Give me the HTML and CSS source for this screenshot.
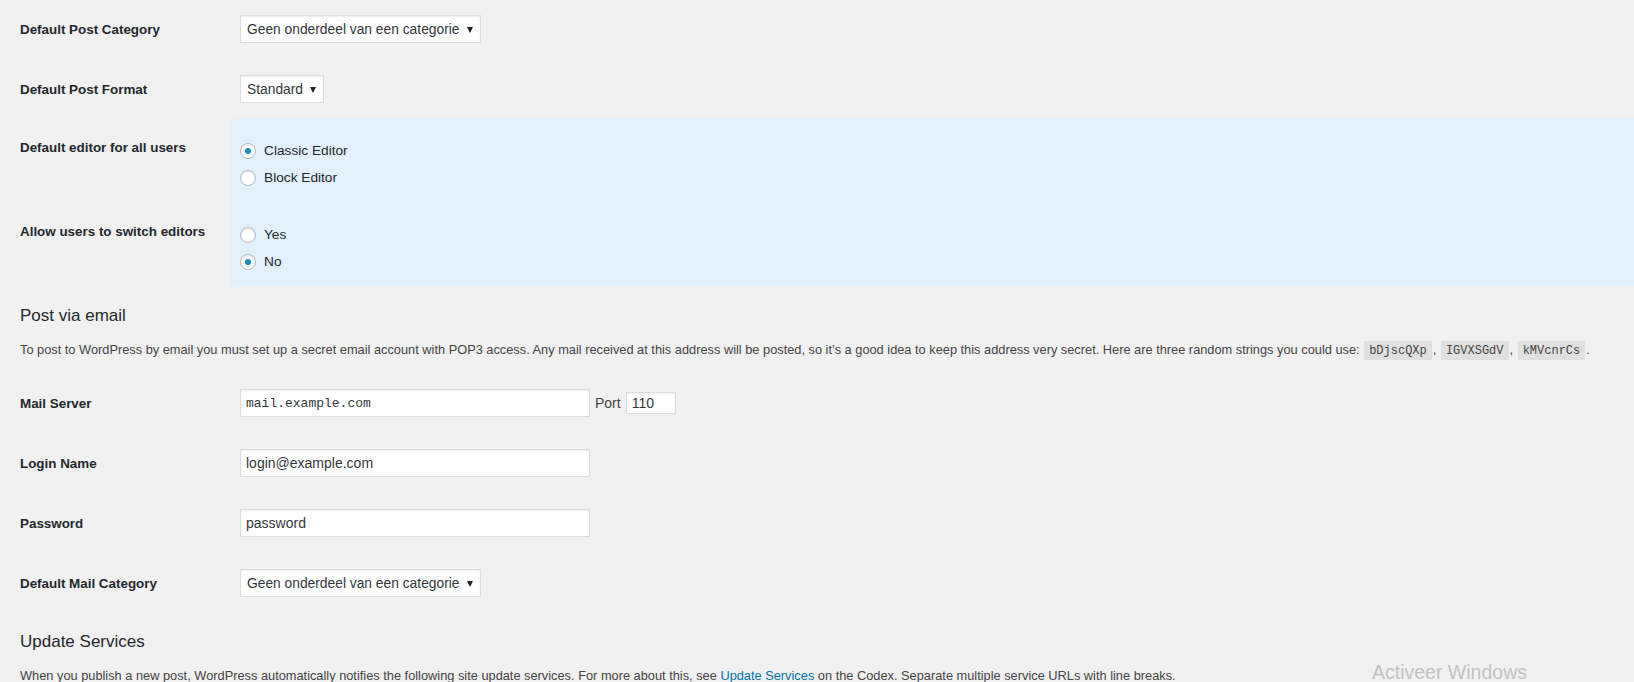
FILE: index.html
```html
<!DOCTYPE html>
<html lang="en">
<head>
    <meta charset="UTF-8">
    <title>Writing Settings</title>
    <link rel="stylesheet" href="styles.css">
</head>
<body>
    <div class="wrap">
        <div class="form-table">
            <div class="form-row">
                <div class="label">Default Post Category</div>
                <div class="field">
                    <span class="select"><select><option>Geen onderdeel van een categorie</option></select></span>
                </div>
            </div>
            <div class="form-row">
                <div class="label">Default Post Format</div>
                <div class="field">
                    <span class="select"><select><option>Standard</option></select></span>
                </div>
            </div>
            <!-- classic editor plugin options -->
            <div class="form-row highlight">
                <div class="label">Default editor for all users</div>
                <div class="field radios">
                    <label><input type="radio" name="editor" checked> Classic Editor</label>
                    <label><input type="radio" name="editor"> Block Editor</label>
                </div>
            </div>
            <div class="form-row highlight">
                <div class="label">Allow users to switch editors</div>
                <div class="field radios">
                    <label><input type="radio" name="switch"> Yes</label>
                    <label><input type="radio" name="switch" checked> No</label>
                </div>
            </div>
        </div>

        <h2>Post via email</h2>
        <p>To post to WordPress by email you must set up a secret email account with POP3 access. Any mail received at this address will be posted, so it&rsquo;s a good idea to keep this address very secret. Here are three random strings you could use: <code>bDjscQXp</code>, <code>IGVXSGdV</code>, <code>kMVcnrCs</code>.</p>

        <div class="form-table">
            <div class="form-row">
                <div class="label">Mail Server</div>
                <div class="field inline">
                    <input type="text" class="regular-text code" value="mail.example.com">
                    <span class="port-label">Port</span>
                    <input type="text" class="small-text" value="110">
                </div>
            </div>
            <div class="form-row">
                <div class="label">Login Name</div>
                <div class="field">
                    <input type="text" class="regular-text" value="login@example.com">
                </div>
            </div>
            <div class="form-row">
                <div class="label">Password</div>
                <div class="field">
                    <input type="text" class="regular-text" value="password">
                </div>
            </div>
            <div class="form-row">
                <div class="label">Default Mail Category</div>
                <div class="field">
                    <span class="select"><select><option>Geen onderdeel van een categorie</option></select></span>
                </div>
            </div>
        </div>

        <h2>Update Services</h2>
        <p>When you publish a new post, WordPress automatically notifies the following site update services. For more about this, see <a href="#">Update Services</a> on the Codex. Separate multiple service URLs with line breaks.</p>
    </div>

    <div class="activate">Activeer Windows</div>
</body>
</html>
```

FILE: styles.css
```css
*{
    box-sizing: border-box;
}
html, body{
    margin: 0;
    padding: 0;
    height: 682px;
    overflow: hidden;
    background-color: #f1f1f1;
}
body{
    position: relative;
    font-family: "Liberation Sans", Arial, sans-serif;
    font-size: 13px;
    line-height: 1.4;
    color: #444;
}
.wrap{
    margin-top: -1px;
    padding-left: 20px;
}

/* settings rows: label column + field column */
.form-row{
    display: grid;
    grid-template-columns: 210px 1fr;
}
.form-row .label{
    padding: 22px 10px 18px 0;
    font-size: 13.4px;
    font-weight: bold;
    line-height: 18px;
    color: #23282d;
}
.form-row .field{
    padding: 15px 10px;
    font-size: 14px;
    line-height: 18px;
    color: #23282d;
}
.form-row.highlight .label{
    padding-top: 20px;
}
.form-row.highlight .field{
    background-color: #e1f0fb;
}
.field.inline{
    display: flex;
    align-items: center;
    gap: 5px;
}
.field.radios{
    padding: 18px 10px 12px;
}
.field.radios label{
    display: flex;
    align-items: center;
    gap: 8px;
    height: 27px;
    font-size: 13.7px;
}

/* selects */
.select{
    position: relative;
    display: inline-block;
    margin: 1px 0;
    vertical-align: top;
}
.select select{
    -webkit-appearance: none;
    appearance: none;
    height: 28px;
    padding: 2px 20px 2px 6px;
    border: 1px solid #ddd;
    border-radius: 0;
    background-color: #fff;
    box-shadow: inset 0 1px 2px rgba(0, 0, 0, .07);
    font-family: "Liberation Sans", Arial, sans-serif;
    font-size: 13.8px;
    color: #32373c;
}
.select::after{
    content: "";
    position: absolute;
    right: 8px;
    top: 12px;
    border-left: 3px solid transparent;
    border-right: 3px solid transparent;
    border-top: 6px solid #222;
    pointer-events: none;
}

/* radios */
input[type=radio]{
    -webkit-appearance: none;
    appearance: none;
    display: grid;
    place-items: center;
    width: 16px;
    height: 16px;
    margin: 0;
    border: 1px solid #b4b9be;
    border-radius: 50%;
    background-color: #fff;
    box-shadow: inset 0 1px 2px rgba(0, 0, 0, .1);
}
input[type=radio]:checked::before{
    content: "";
    width: 6px;
    height: 6px;
    border-radius: 50%;
    background-color: #1e8cbe;
}

/* text inputs */
.regular-text, .small-text{
    height: 28px;
    margin: 1px 0;
    padding: 3px 5px;
    border: 1px solid #ddd;
    background-color: #fff;
    box-shadow: inset 0 1px 2px rgba(0, 0, 0, .07);
    font-family: "Liberation Sans", Arial, sans-serif;
    font-size: 14px;
    color: #32373c;
}
.regular-text{
    width: 350px;
}
.regular-text.code{
    font-family: "Liberation Mono", monospace;
    font-size: 13px;
}
.small-text{
    width: 50px;
    height: 22px;
    padding: 1px 5px;
}
.port-label{
    color: #444;
}

h2{
    margin: 17px 0 12px;
    font-size: 17px;
    font-weight: normal;
    line-height: 23px;
    color: #23282d;
}
p{
    margin: 13px 0 12px;
    font-size: 12.8px;
    line-height: 20px;
}
code{
    margin: 0 1px;
    padding: 3px 5px 2px;
    background-color: rgba(0, 0, 0, .07);
    font-family: "Liberation Mono", monospace;
    font-size: 12px;
}
a{
    color: #0073aa;
    text-decoration: none;
}

/* windows activation watermark */
.activate{
    position: absolute;
    left: 1372px;
    top: 659px;
    font-size: 19.5px;
    color: #c2c2c2;
    white-space: nowrap;
}
```
